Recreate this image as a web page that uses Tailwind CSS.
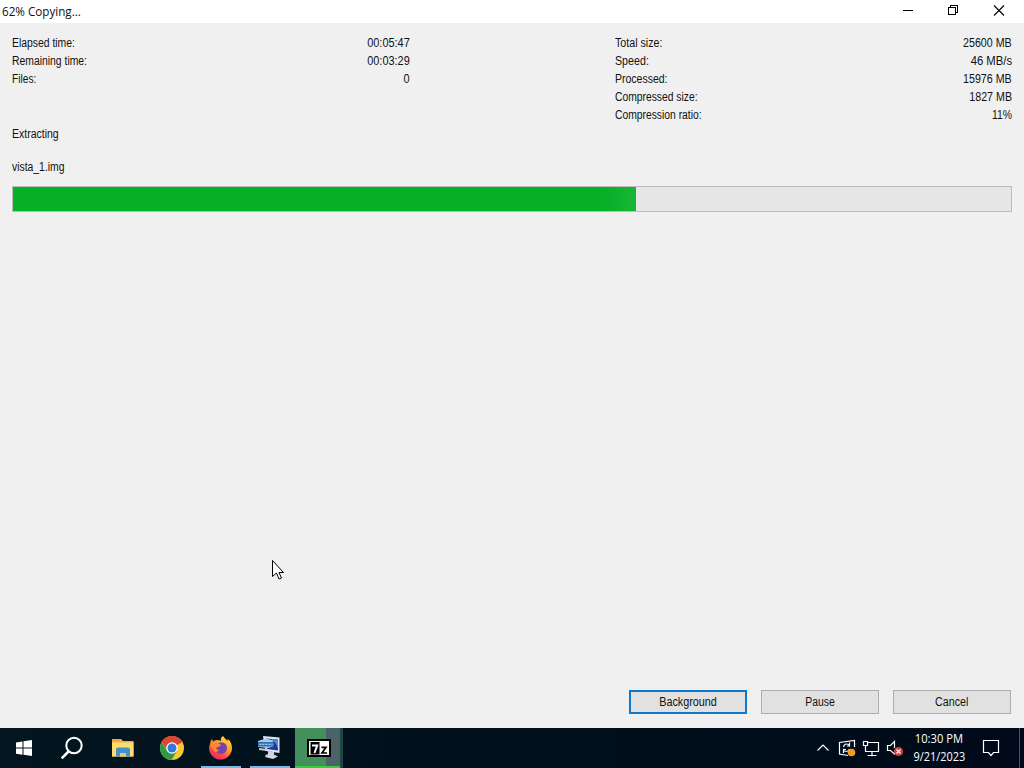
<!DOCTYPE html>
<html lang="en">
<head>
<meta charset="utf-8">
<title>62% Copying...</title>
<script src="https://cdn.jsdelivr.net/npm/@tailwindcss/browser@4"></script>
</head>
<body class="w-[1024px] h-[768px] overflow-hidden flex flex-col bg-[#f0f0f0] text-[#111] font-['Liberation_Sans',Arial,sans-serif] text-[12px] leading-[18px] whitespace-nowrap">
<header class="h-[23px] shrink-0 bg-white flex items-center justify-between pl-[2px]">
  <h1 class="font-['Open_Sans','Noto_Sans',sans-serif] text-[12px] origin-left scale-x-[.97] pt-px">62% Copying...</h1>
  <svg width="140" height="23" viewBox="884 0 140 23" fill="none" stroke="#000" stroke-width="1" shape-rendering="crispEdges">
    <path d="M903 10.500h10M948.500 7.500h7v7h-7zM950.500 7V5.500h7v7h-2"/>
    <path d="M994 5.500l10 10M1004 5.500l-10 10" shape-rendering="auto" stroke-width="1.100"/>
  </svg>
</header>
<main class="flex-1 flex flex-col px-3 pt-[11px]">
  <section class="flex h-[90px]">
    <dl class="w-[397.5px] flex flex-col">
      <div class="flex justify-between"><dt class="origin-left scale-x-[.865]">Elapsed time:</dt><dd class="origin-right scale-x-[.91]">00:05:47</dd></div>
      <div class="flex justify-between"><dt class="origin-left scale-x-[.865]">Remaining time:</dt><dd class="origin-right scale-x-[.91]">00:03:29</dd></div>
      <div class="flex justify-between"><dt class="origin-left scale-x-[.85]">Files:</dt><dd class="origin-right scale-x-[.91]">0</dd></div>
    </dl>
    <dl class="w-[397px] ml-auto flex flex-col">
      <div class="flex justify-between"><dt class="origin-left scale-x-[.89]">Total size:</dt><dd class="origin-right scale-x-[.89]">25600 MB</dd></div>
      <div class="flex justify-between"><dt class="origin-left scale-x-[.89]">Speed:</dt><dd class="origin-right scale-x-[.94]">46 MB/s</dd></div>
      <div class="flex justify-between"><dt class="origin-left scale-x-[.875]">Processed:</dt><dd class="origin-right scale-x-[.89]">15976 MB</dd></div>
      <div class="flex justify-between"><dt class="origin-left scale-x-[.86]">Compressed size:</dt><dd class="origin-right scale-x-[.89]">1827 MB</dd></div>
      <div class="flex justify-between"><dt class="origin-left scale-x-[.86]">Compression ratio:</dt><dd class="origin-right scale-x-[.87]">11%</dd></div>
    </dl>
  </section>
  <p class="mt-px origin-left scale-x-[.875] self-start">Extracting</p>
  <p class="mt-[15px] origin-left scale-x-[.865] self-start">vista_1.img</p>
  <div class="mt-[10px] h-[26px] border border-[#bcbcbc] bg-[#e6e6e6]">
    <div class="h-full bg-linear-to-r from-[#06b025] from-95% to-[#17b638]" style="width:62.4%"></div>
  </div>
  <div class="mt-auto mb-[14px] mr-px flex justify-end gap-[14px]">
    <button class="w-[118px] h-6 border-2 border-[#0f78cd] bg-[#e1e1e1]"><span class="inline-block scale-x-[.9] leading-5">Background</span></button>
    <button class="w-[118px] h-6 border border-[#adadad] bg-[#e1e1e1]"><span class="inline-block scale-x-[.87] leading-[22px]">Pause</span></button>
    <button class="w-[118px] h-6 border border-[#adadad] bg-[#e1e1e1]"><span class="inline-block scale-x-[.89] leading-[22px]">Cancel</span></button>
  </div>
</main>
<footer class="h-10 shrink-0 flex bg-linear-to-r from-[#03151f] via-[#01101b] to-[#000a1a] text-white">
  <div class="w-12 flex items-center justify-center">
    <svg width="48" height="40" fill="#fff"><path d="M16 14.500l6.500-1v6H16zM23.500 13.300l8.500-1.300v7.500h-8.500zM16 20.500h6.500v6.200l-6.500-1zM23.500 20.500H32V28l-8.500-1.200z"/></svg>
  </div>
  <div class="w-12">
    <svg width="48" height="40" fill="none" stroke="#fff"><circle cx="26" cy="17.500" r="7.700" stroke-width="2"/><path d="M20.500 23.500L13.700 30.300" stroke-width="2.500"/></svg>
  </div>
  <div class="w-[52px]">
    <svg width="52" height="40"><path d="M16 11h9l2 2h10.500v15.500H16z" fill="#e9b44c"/><path d="M16 14.500h21.500v14H16z" fill="#ffda70"/><path d="M16 11h8v2h-8z" fill="#eda52d"/><path d="M20 28.500v-7q0-2 2-2h10q2 0 2 2v7h-4V25h-6v3.500z" fill="#4292c9"/><path d="M24 25h6v3.500h-6z" fill="#e9c76b"/></svg>
  </div>
  <div class="w-[49px]">
    <svg width="49" height="40" viewBox="148 0 49 40"><circle cx="172" cy="20" r="12" fill="#fbc92f"/><path d="M172 20L161.600 14A12 12 0 0 1 182.400 14z" fill="#dc4437"/><path d="M172 20l5 3-5.500 9A12 12 0 0 1 161.600 14l5.500 9z" fill="#2b9a4b"/><path d="M161.600 14A12 12 0 0 1 182.400 14H172l-5 8z" fill="#dc4437"/><circle cx="172" cy="20" r="5.800" fill="#fff"/><circle cx="172" cy="20" r="4.500" fill="#2f7bdd"/></svg>
  </div>
  <div class="w-[48px]">
    <svg width="48" height="40" viewBox="197 0 48 40"><defs><linearGradient id="fox" x1=".85" y1="0" x2=".25" y2="1"><stop stop-color="#ffe447"/><stop offset=".45" stop-color="#ff9927"/><stop offset=".75" stop-color="#fb4540"/><stop offset="1" stop-color="#e5247f"/></linearGradient></defs><path d="M210 16q0-3 2-5l1 2.500q2-1.500 4-1.500 2 0 4 1-1-3 2-5 2 3 5 5l-.500-2.500q4.500 4 4.500 9.500a11.500 11.500 0 0 1-23 0q0-2 1-4z" fill="url(#fox)"/><path d="M215 20q0-5 5-5.500 6-.500 7 4.500 0 7-6 7-5 0-6-6z" fill="#7542b5"/><path d="M211 15q4-2 7 0l3 2q-1 2-4 2l-1 2 3 1q-3 4-6 0-3-3-2-7z" fill="#ff8a29"/><path d="M201 38h40v2h-40z" fill="#76b9ed"/></svg>
  </div>
  <div class="w-[50px]">
    <svg width="50" height="40" viewBox="245 0 50 40"><path d="M263 8l16.500 1.500V25l-14-2z" fill="#dce5f2"/><path d="M266 10.500l12 1V22.500l-11-1.500z" fill="#173a9b"/><path d="M271 11l7 .500V21q-2-7-7-10z" fill="#5685d8"/><path d="M268 23l6 1v2.500l4 2-5 2.500-8-2 1-2.500 2 0z" fill="#d4d5d8"/><path d="M258 13l8-2.500 7 2v6l-5 1.500-10-1z" fill="#a9c8ea"/><path d="M258 14h16v4.500h-16z" fill="#2b74b9"/><path d="M259.500 16.300h13" stroke="#c9e6ff" stroke-dasharray="2 1"/><path d="M259 20l8 1v2l-8-1z" fill="#c7cbd4"/><path d="M250 38h40v2h-40z" fill="#76b9ed"/></svg>
  </div>
  <div class="w-12">
    <svg width="48" height="40" viewBox="295 0 48 40"><path d="M295 0h31v40h-31z" fill="#43905c"/><path d="M326 0h14v40h-14z" fill="#4b6267"/><path d="M340 0h3v40h-3z" fill="#1d4742"/><path d="M295 38h45v2h-45z" fill="#32d13b"/><path d="M308 12h22v16h-22z" fill="#fff" stroke="#000" stroke-width="2"/><path d="M310.500 14h9v12.500h-9z"/><path d="M312 17.500h5.200L314.500 25" fill="none" stroke="#fff" stroke-width="2"/><path d="M321.500 19.300h4.500l-4 5.700h5" fill="none" stroke="#000" stroke-width="1.700"/></svg>
  </div>
  <div class="ml-auto w-[91px]">
    <svg width="91" height="40" viewBox="812 0 91 40" fill="none" stroke="#fff" stroke-width="1.200"><path d="M817.500 22.500l5.500-5.500 5.500 5.500"/><path d="M848 27.500l-8.500-1.500V14.500l15-2V19"/><path d="M843.500 19q.5-3 3-3 2 0 3 1.500v-3M850 18h-3M849.500 21q-1 2.500-3 2.500-2 0-3-1.500v3M843 21.500h3"/><circle cx="851.500" cy="24.500" r="3.800" fill="#f39c1d" stroke="none"/><path d="M867.500 14.500h11v9h-13v-4M872 24v3M867.500 27.500h9M863.500 13.500h4v4h-4zM865.500 17.500v3"/><path d="M895 25l-.500 1-4-3.500h-3v-5h3l4-4V20"/><circle cx="898.500" cy="23.500" r="4.500" fill="#d83b40" stroke="none"/><path d="M896.500 21.500l4 4M900.500 21.500l-4 4"/></svg>
  </div>
  <div class="w-[72px] flex flex-col items-center font-['Open_Sans','Noto_Sans',sans-serif] pt-[2px]"><span class="scale-x-[.93]">10:30 PM</span><span class="scale-x-[.91]">9/21/2023</span></div>
  <svg width="49" height="40" viewBox="975 0 49 40" fill="none" stroke="#fff" stroke-width="1.200"><path d="M983.500 12.500h15v12h-5l-2.500 3-2.500-3h-5z"/><path d="M1019.500 0v40" stroke="#4a535d" stroke-width="1"/></svg>
</footer>
<svg class="absolute left-[272px] top-[560px]" width="13" height="20"><path d="M.500.500v16l4-3.500 2.500 6 2.500-1-2.500-5.500h4.500z" fill="#fff" stroke="#000"/></svg>
</body>
</html>
